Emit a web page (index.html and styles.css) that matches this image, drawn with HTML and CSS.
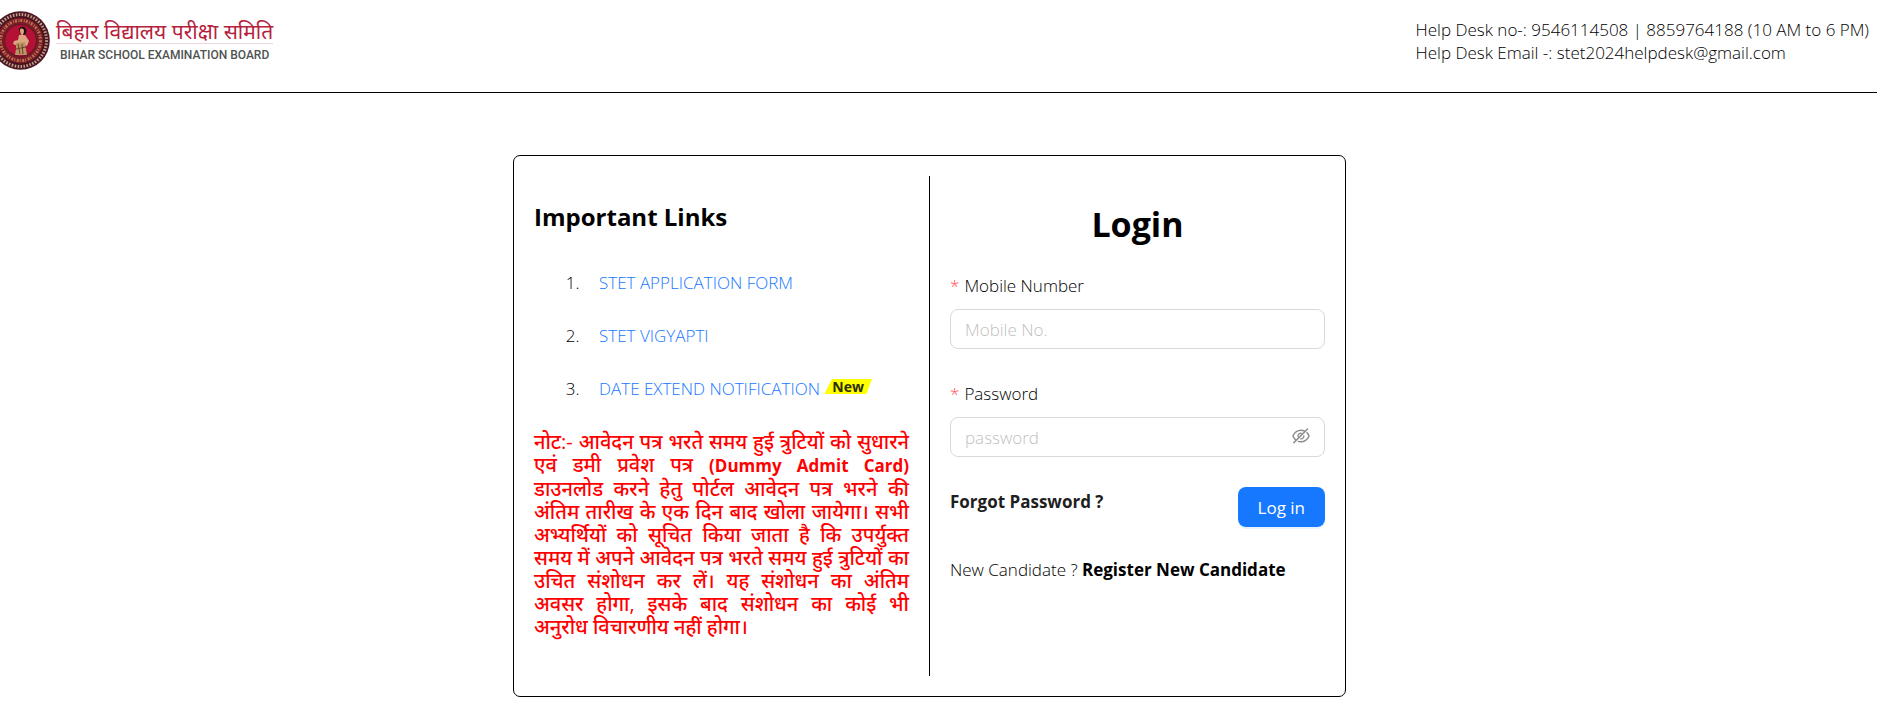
FILE: index.html
```html
<!DOCTYPE html>
<html lang="en">
<head>
    <meta charset="UTF-8">
    <meta name="viewport" content="width=device-width, initial-scale=1.0">
    <title>Bihar School Examination Board - STET</title>
    <link rel="stylesheet" href="styles.css">
</head>
<body>
    <header class="header">
        <div class="logo">
            <svg class="emblem" viewBox="9 0 50 59" aria-hidden="true">
                <circle cx="29.5" cy="29.5" r="29.3" fill="#4c1824"/>
                <circle cx="29.5" cy="29.5" r="26" fill="none" stroke="#c2a08a" stroke-width="3" stroke-dasharray="1.5 1.5"/>
                <circle cx="29.5" cy="29.5" r="23.5" fill="#7c1a28" stroke="#3d1219"/>
                <circle cx="29.5" cy="29.5" r="20" fill="none" stroke="#b5764f" stroke-width="3" stroke-dasharray="2 1.5 1 1"/>
                <circle cx="29.5" cy="29.5" r="16" fill="#b31236" stroke="#5a1a20"/>
                <path d="M28 18c1-3 6-3 7 0 1 2 0 4-1 6l-5-1z" fill="#1d1114"/>
                <path d="M29 19c0-2 4-2 4 1 0 2-1 4-2 4s-2-2-2-5z" fill="#e0a47c"/>
                <path d="M28 24l6 0 4 6-2 5-3-1-6 1-5-2 1-3 4-1z" fill="#dca77f"/>
                <path d="M25 32l9-1 1 7 1 6H24l1-6z" fill="#b99563"/>
                <path d="M27 33l2 10M31 33l1 10M25 38l10-2" stroke="#6f4130" fill="none"/>
            </svg>
            <div class="logo-text">
                <span class="logo-hindi">बिहार विद्यालय परीक्षा समिति</span>
                <span class="logo-english">BIHAR SCHOOL EXAMINATION BOARD</span>
            </div>
        </div>
        <div class="helpdesk">
            <div>Help Desk no-: 9546114508 | 8859764188 (10 AM to 6 PM)</div>
            <div>Help Desk Email -: stet2024helpdesk@gmail.com</div>
        </div>
    </header>

    <main class="main">
        <div class="card">
            <section class="links">
                <h2>Important Links</h2>
                <ol>
                    <li><a href="#">STET APPLICATION FORM</a></li>
                    <li><a href="#">STET VIGYAPTI</a></li>
                    <li><a href="#">DATE EXTEND NOTIFICATION</a> <span class="new">New</span></li>
                </ol>
                <p class="note">नोट:- आवेदन पत्र भरते समय हुई त्रुटियों को सुधारने एवं डमी प्रवेश पत्र <span class="latin">(Dummy Admit Card)</span> डाउनलोड करने हेतु पोर्टल आवेदन पत्र भरने की अंतिम तारीख के एक दिन बाद खोला जायेगा। सभी अभ्यर्थियों को सूचित किया जाता है कि उपर्युक्त समय में अपने आवेदन पत्र भरते समय हुई त्रुटियों का उचित संशोधन कर लें। यह संशोधन का अंतिम अवसर होगा, इसके बाद संशोधन का कोई भी अनुरोध विचारणीय नहीं होगा।</p>
            </section>

            <section class="login">
                <h1>Login</h1>
                <form>
                    <div class="field">
                        <label for="mobile"><span class="required">*</span>Mobile Number</label>
                        <input type="text" id="mobile" placeholder="Mobile No.">
                    </div>
                    <div class="field">
                        <label for="password"><span class="required">*</span>Password</label>
                        <div class="password-box">
                            <input type="password" id="password" placeholder="password">
                            <button type="button" class="eye" aria-label="Show password">
                                <svg viewBox="64 64 896 896" fill="currentColor"><path d="M942.2 486.2Q889.47 375.11 816.7 305l-50.88 50.88C807.31 395.53 843.45 447.4 874.7 512 791.5 684.2 673.4 766 512 766q-72.67 0-133.87-22.38L323 798.75Q408 838 512 838q288.3 0 430.2-300.3a60.29 60.29 0 000-51.5zm-63.57-320.64L836 122.88a8 8 0 00-11.32 0L715.31 232.2Q624.86 186 512 186q-288.3 0-430.2 300.3a60.3 60.3 0 000 51.5q56.69 119.4 136.5 191.41L112.48 835a8 8 0 000 11.31L155.17 889a8 8 0 0011.31 0l712.15-712.12a8 8 0 000-11.32zM149.3 512C232.6 339.8 350.7 258 512 258c54.54 0 104.13 9.36 149.12 28.39l-70.3 70.3a176 176 0 00-238.13 238.13l-83.42 83.42C223.1 637.49 183.3 582.28 149.3 512zm246.7 0a112.11 112.11 0 01146.2-106.69L401.31 546.2A112 112 0 01396 512z"/><path d="M508 624c-3.46 0-6.87-.16-10.25-.47l-52.82 52.82a176.09 176.09 0 00227.42-227.42l-52.82 52.82c.31 3.38.47 6.79.47 10.25a111.94 111.94 0 01-112 112z"/></svg>
                            </button>
                        </div>
                    </div>
                    <div class="actions">
                        <a href="#" class="forgot">Forgot Password ?</a>
                        <button type="submit" class="submit">Log in</button>
                    </div>
                </form>
                <p class="register">New Candidate ? <a href="#">Register New Candidate</a></p>
            </section>
        </div>
    </main>
</body>
</html>
```
FILE: styles.css
```css
* {
    box-sizing: border-box;
}
body {
    margin: 0;
    font-family: "Open Sans", "Noto Sans", sans-serif;
    font-size: 17px;
    font-weight: 350;
    line-height: 23px;
    color: #000;
    background-color: #fff;
}
a {
    color: #1677ff;
    text-decoration: none;
}
.header {
    display: flex;
    justify-content: space-between;
    height: 93px;
    padding: 11px 8px 0 0;
    border-bottom: 1px solid #000;
}
.logo {
    display: flex;
    gap: 6px;
}
.emblem {
    width: 50px;
    height: 59px;
}
.logo-text {
    display: flex;
    flex-direction: column;
    align-items: center;
    padding-top: 8px;
}
.logo-hindi {
    font-size: 21px;
    font-weight: 400;
    line-height: 24px;
    color: #b5213c;
    border-bottom: 1px solid #f0d5da;
}
.logo-english {
    font-family: Roboto, sans-serif;
    font-size: 12px;
    font-weight: 500;
    color: #4f5352;
}
.helpdesk {
    padding-top: 7px;
}
.main {
    padding: 62px 18px 0 0;
}
.card {
    display: flex;
    max-width: 833px;
    margin: 0 auto;
    padding: 20px;
    border: 1px solid #000;
    border-radius: 7px;
}
.links,
.login {
    flex: 1;
    min-width: 0;
    min-height: 500px;
}
.links {
    padding-right: 20px;
    border-right: 1px solid #000;
}
.links h2 {
    margin: 25px 0 38px;
    font-size: 24px;
    line-height: 32px;
}
.links ol {
    display: flex;
    flex-direction: column;
    gap: 30px;
    margin: 0 0 30px;
    padding-left: 50px;
}
.links li {
    padding-left: 15px;
}
.new {
    display: inline-block;
    padding: 0 8px;
    font-size: 14px;
    font-weight: 700;
    line-height: 15px;
    vertical-align: 3px;
    color: #2d2d00;
    background-color: #ff0;
    clip-path: polygon(16% 0, 100% 0, 88% 100%, 0 100%);
}
.note {
    margin: 0;
    font-size: 20px;
    font-weight: 500;
    color: #f00;
    text-align: justify;
}
.latin {
    font-size: 17px;
    font-weight: 700;
}
.login {
    padding-left: 20px;
}
.login h1 {
    margin: 23px 0 25px;
    font-size: 34px;
    line-height: 50px;
    text-align: center;
}
.field {
    margin-bottom: 30px;
}
.field label {
    display: block;
    margin-bottom: 12px;
}
.field + .field label {
    padding-top: 3px;
}
.required {
    margin-right: 5px;
    color: #ff4d4f;
}
.field input {
    display: block;
    width: 100%;
    height: 40px;
    padding: 0 14px;
    font: inherit;
    border: 1px solid #d9d9d9;
    border-radius: 8px;
}
.field input::placeholder {
    color: #bfbfbf;
}
.password-box {
    position: relative;
}
.eye {
    position: absolute;
    top: 10px;
    right: 15px;
    width: 18px;
    height: 18px;
    padding: 0;
    color: #8c8c8c;
    background: none;
    border: 0;
}
.eye svg {
    display: block;
}
.actions {
    display: flex;
    justify-content: space-between;
    align-items: flex-start;
}
.forgot {
    padding-top: 3px;
    font-weight: 700;
    color: #1f1f1f;
}
.submit {
    height: 40px;
    padding: 0 20px;
    font: inherit;
    font-weight: 400;
    color: #fff;
    background-color: #1677ff;
    border: 0;
    border-radius: 8px;
    box-shadow: 0 2px 0 rgba(5, 145, 255, 0.1);
}
.register {
    margin: 31px 0 0;
}
.register a {
    font-weight: 700;
    color: #000;
}
```
